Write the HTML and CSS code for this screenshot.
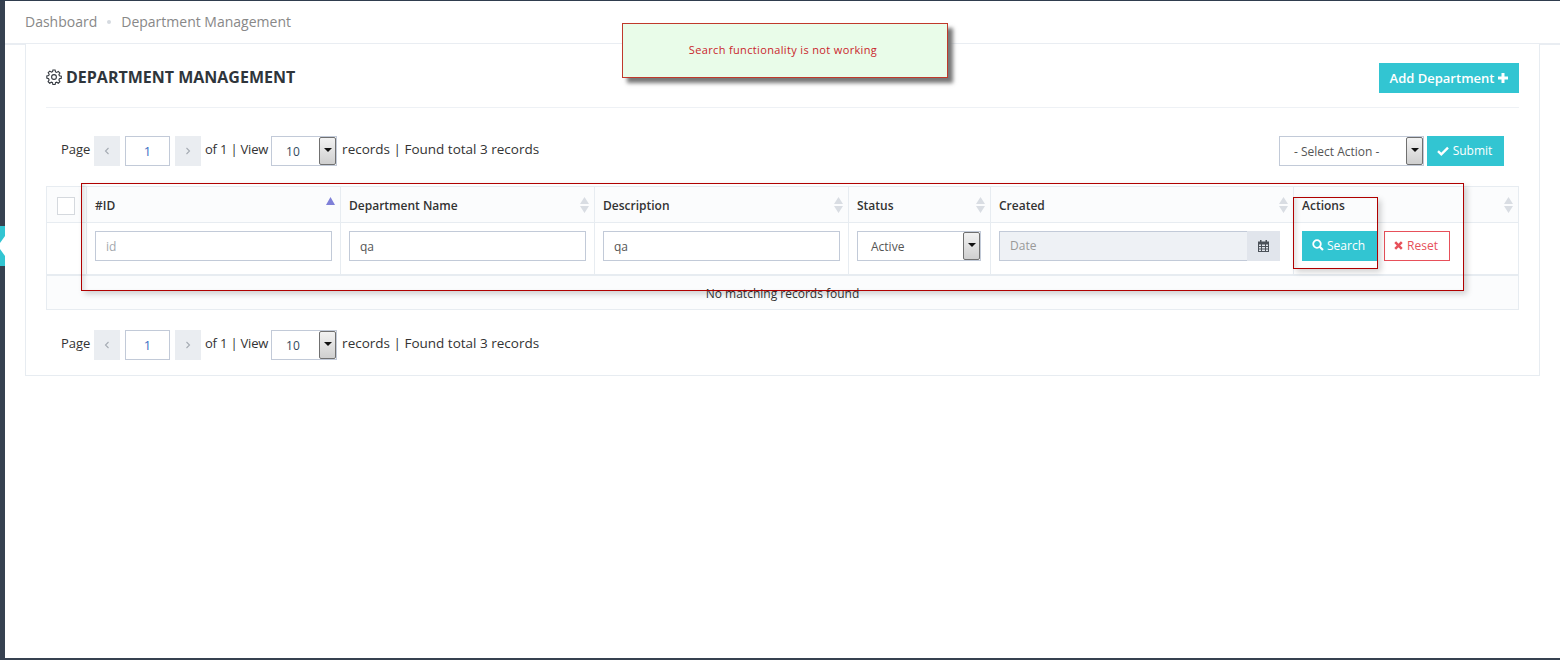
FILE: index.html
```html
<!DOCTYPE html>
<html lang="en">
<head>
    <meta charset="UTF-8">
    <title>Department Management</title>
    <link rel="stylesheet" href="styles.css">
</head>
<body>
<div class="shell">
    <div class="sidebar"></div>
    <div class="handle">
        <svg width="5" height="40" viewBox="0 0 5 40"><path d="M5 10 L0 17 V23 L5 30z" fill="#fff"/></svg>
    </div>
    <div class="main">
        <div class="breadcrumb">
            <span>Dashboard</span>
            <i class="crumb-dot"></i>
            <span>Department Management</span>
        </div>
        <div class="content">
            <div class="portlet">
                <div class="portlet-title">
                    <h1>
                        <svg class="gear" width="16" height="16" viewBox="0 0 16 16" fill="none" stroke="#33383f" stroke-width="1.1">
                            <circle cx="8" cy="8" r="2.4"/>
                            <path d="M6.9 1h2.2l.4 1.9 1.2.5 1.6-1 1.6 1.6-1 1.6.5 1.2 1.9.4v2.2l-1.9.4-.5 1.2 1 1.6-1.6 1.6-1.6-1-1.2.5-.4 1.9H6.900l-.4-1.900-1.200-.5-1.600 1-1.600-1.600 1-1.600-.5-1.200L.8 9.100V6.900l1.900-.4.5-1.200-1-1.600 1.600-1.600 1.600 1 1.200-.5z"/>
                        </svg>
                        DEPARTMENT MANAGEMENT
                    </h1>
                    <a class="btn btn-add">Add Department
                        <svg width="10" height="10" viewBox="0 0 10 10"><path d="M3.500 0h3v3.500H10v3H6.500V10h-3V6.500H0v-3h3.500z" fill="#fff"/></svg>
                    </a>
                </div>

                <div class="toolbar">
                    <div class="pager">
                        <span class="pager-page">Page</span>
                        <a class="pager-btn"><svg width="6" height="8" viewBox="0 0 6 8"><path d="M4.500 1 L1.500 4 L4.500 7" fill="none" stroke="#a5abb3" stroke-width="1.100"/></svg></a>
                        <span class="pager-input">1</span>
                        <a class="pager-btn"><svg width="6" height="8" viewBox="0 0 6 8"><path d="M1.500 1 L4.500 4 L1.500 7" fill="none" stroke="#a5abb3" stroke-width="1.100"/></svg></a>
                        <span class="pager-of">of 1 | View</span>
                        <div class="select select-view"><span class="select-text">10</span><span class="select-arrow"></span></div>
                        <span class="pager-found">records | Found total 3 records</span>
                    </div>
                    <div class="actions">
                        <div class="select select-action"><span class="select-text">- Select Action -</span><span class="select-arrow"></span></div>
                        <a class="btn btn-submit">
                            <svg width="12" height="10" viewBox="0 0 12 10"><path d="M1 5.200 L4.300 8.300 L11 1.700" fill="none" stroke="#fff" stroke-width="2.400"/></svg>
                            Submit
                        </a>
                    </div>
                </div>

                <table class="grid">
                    <colgroup>
                        <col class="col-check"><col class="col-id"><col class="col-name"><col class="col-desc">
                        <col class="col-status"><col class="col-created"><col class="col-actions">
                    </colgroup>
                    <thead>
                        <tr>
                            <th><span class="checkbox"></span></th>
                            <th>#ID<svg class="sort sort-active" width="9" height="8" viewBox="0 0 9 8"><path d="M4.500 0 L9 8 H0z" fill="#7f80d8"/></svg></th>
                            <th>Department Name<svg class="sort" width="9" height="16" viewBox="0 0 9 16"><path d="M4.500 0 L9 7 H0z M4.500 16 L9 9 H0z" fill="#d9dde3"/></svg></th>
                            <th>Description<svg class="sort" width="9" height="16" viewBox="0 0 9 16"><path d="M4.500 0 L9 7 H0z M4.500 16 L9 9 H0z" fill="#d9dde3"/></svg></th>
                            <th>Status<svg class="sort" width="9" height="16" viewBox="0 0 9 16"><path d="M4.500 0 L9 7 H0z M4.500 16 L9 9 H0z" fill="#d9dde3"/></svg></th>
                            <th>Created<svg class="sort" width="9" height="16" viewBox="0 0 9 16"><path d="M4.500 0 L9 7 H0z M4.500 16 L9 9 H0z" fill="#d9dde3"/></svg></th>
                            <th>Actions<svg class="sort" width="9" height="16" viewBox="0 0 9 16"><path d="M4.500 0 L9 7 H0z M4.500 16 L9 9 H0z" fill="#d9dde3"/></svg></th>
                        </tr>
                    </thead>
                    <tbody>
                        <tr class="filter-row">
                            <td></td>
                            <td><span class="field field-empty">id</span></td>
                            <td><span class="field">qa</span></td>
                            <td><span class="field">qa</span></td>
                            <td><div class="select select-status"><span class="select-text">Active</span><span class="select-arrow"></span></div></td>
                            <td>
                                <div class="date">
                                    <span class="date-text">Date</span>
                                    <span class="date-addon">
                                        <svg width="11" height="12" viewBox="0 0 11 12"><path d="M2 0h1.500v1.500h4V0H9v1.500h2V12H0V1.500h2z M1 4.500v1.500h2V4.500z M4 4.500v1.500h3V4.500z M8 4.500v1.500h2V4.500z M1 7v1.500h2V7z M4 7v1.500h3V7z M8 7v1.500h2V7z M1 9.500V11h2V9.500z M4 9.500V11h3V9.500z M8 9.500V11h2V9.500z" fill="#4b5159" fill-rule="evenodd"/></svg>
                                    </span>
                                </div>
                            </td>
                            <td>
                                <div class="row-actions">
                                    <a class="btn btn-search">
                                        <svg width="12" height="12" viewBox="0 0 12 12"><circle cx="5" cy="5" r="3.800" fill="none" stroke="#fff" stroke-width="1.800"/><path d="M7.700 7.700 L11 11" stroke="#fff" stroke-width="2.200"/></svg>
                                        Search
                                    </a>
                                    <a class="btn btn-reset">
                                        <svg width="9" height="9" viewBox="0 0 9 9"><path d="M1.200 1.200 L7.800 7.800 M7.800 1.200 L1.200 7.800" stroke="#e7505a" stroke-width="2.500"/></svg>
                                        Reset
                                    </a>
                                </div>
                            </td>
                        </tr>
                        <tr class="empty-row">
                            <td colspan="7">No matching records found</td>
                        </tr>
                    </tbody>
                </table>

                <div class="toolbar toolbar-bottom">
                    <div class="pager">
                        <span class="pager-page">Page</span>
                        <a class="pager-btn"><svg width="6" height="8" viewBox="0 0 6 8"><path d="M4.500 1 L1.500 4 L4.500 7" fill="none" stroke="#a5abb3" stroke-width="1.100"/></svg></a>
                        <span class="pager-input">1</span>
                        <a class="pager-btn"><svg width="6" height="8" viewBox="0 0 6 8"><path d="M1.500 1 L4.500 4 L1.500 7" fill="none" stroke="#a5abb3" stroke-width="1.100"/></svg></a>
                        <span class="pager-of">of 1 | View</span>
                        <div class="select select-view"><span class="select-text">10</span><span class="select-arrow"></span></div>
                        <span class="pager-found">records | Found total 3 records</span>
                    </div>
                </div>
            </div>
        </div>
    </div>

    <!-- annotations drawn over the screenshot -->
    <div class="note-box note-filters"></div>
    <div class="note-box note-search"></div>
    <div class="toast">Search functionality is not working</div>
</div>
</body>
</html>
```

FILE: styles.css
```css
* {
    box-sizing: border-box;
}
body {
    margin: 0;
    font-family: "Open Sans", sans-serif;
    color: #333;
    background-color: #fff;
}
.shell {
    position: relative;
    display: flex;
    height: 660px;
    border-top: 1px solid #2f3d4e;
    border-bottom: 2px solid #364150;
    overflow: hidden;
}
.sidebar {
    width: 5px;
    flex-shrink: 0;
    background-color: #364150;
}
.handle {
    position: absolute;
    left: 0;
    top: 225px;
    width: 5px;
    height: 40px;
    background-color: #32c5d2;
}
.handle svg {
    display: block;
}
.main {
    flex: 1;
    min-width: 0;
}
.breadcrumb {
    display: flex;
    align-items: center;
    height: 44px;
    padding: 0 0 1px 20px;
    font-size: 14px;
    color: #888;
    background-color: #fff;
    border-bottom: 2px solid #e9edf2;
}
.crumb-dot {
    width: 4px;
    height: 4px;
    margin: 0 10px;
    border-radius: 50%;
    background-color: #d5dae0;
}
.content {
    padding: 0 20px;
}
.portlet {
    height: 332px;
    margin-top: -1px;
    padding: 0 20px;
    background-color: #fff;
    border: 1px solid #e7ecf1;
    border-top: 0;
}
.portlet-title {
    display: flex;
    align-items: center;
    justify-content: space-between;
    height: 64px;
    padding-top: 19px;
    border-bottom: 1px solid #eef1f5;
}
.portlet-title h1 {
    display: flex;
    align-items: center;
    gap: 4px;
    margin: -17px 0 0;
    font-size: 16px;
    font-weight: 700;
    color: #2f353b;
}
.btn {
    display: inline-flex;
    align-items: center;
    justify-content: center;
    gap: 4px;
    height: 30px;
    font-size: 13px;
    color: #fff;
    background-color: #32c5d2;
}
.btn-add {
    width: 140px;
    font-weight: 600;
    align-self: flex-start;
}
.toolbar {
    display: flex;
    align-items: center;
    justify-content: space-between;
    height: 30px;
    margin-top: 28px;
    padding: 0 15px;
}
.toolbar-bottom {
    margin-top: 20px;
}
.pager {
    display: flex;
    align-items: center;
    font-size: 13px;
}
.pager-page {
    width: 33px;
    padding-bottom: 4px;
}
.pager-btn {
    display: flex;
    align-items: center;
    justify-content: center;
    width: 26px;
    height: 30px;
    background-color: #eaedf1;
}
.pager-input {
    display: flex;
    align-items: center;
    justify-content: center;
    width: 45px;
    height: 30px;
    margin: 0 5px;
    padding-bottom: 1px;
    font-size: 13px;
    color: #3a6fc4;
    background-color: #fff;
    border: 1px solid #c2cad8;
}
.pager-of {
    margin: 0 3px 0 4px;
    padding-bottom: 4px;
    letter-spacing: -0.2px;
}
.pager-found {
    margin-left: 5px;
    padding-bottom: 4px;
    font-size: 13.5px;
}
.select {
    display: flex;
    flex-shrink: 0;
    justify-content: space-between;
    height: 30px;
    font-size: 12px;
    color: #555;
    background-color: #fff;
    border: 1px solid #c2cad8;
}
.select-text {
    align-self: center;
    padding-top: 1px;
}
.select-arrow {
    position: relative;
    width: 17px;
    background: linear-gradient(#f2f2f2, #cfcfcf);
    border: 1px solid #707070;
    border-radius: 2px;
}
.select-arrow::after {
    content: "";
    position: absolute;
    left: 4px;
    top: 10px;
    border-left: 4px solid transparent;
    border-right: 4px solid transparent;
    border-top: 4px solid #111;
}
.select-view {
    width: 66px;
    padding-left: 14px;
    color: #34495e;
}
.select-action {
    width: 145px;
    padding-left: 14px;
}
.select-status {
    width: 124px;
    padding-left: 13px;
}
.actions {
    display: flex;
    gap: 3px;
}
.btn-submit {
    width: 77px;
    padding: 0 2px 1px 0;
    font-size: 12px;
}
.grid {
    width: 1472px;
    margin-top: 20px;
    table-layout: fixed;
    border-collapse: collapse;
    font-size: 12px;
}
.col-check { width: 40px; }
.col-id { width: 254px; }
.col-name { width: 254px; }
.col-desc { width: 254px; }
.col-status { width: 142px; }
.col-created { width: 303px; }
.col-actions { width: 225px; }
.grid th {
    position: relative;
    height: 36px;
    padding: 2px 8px 0;
    text-align: left;
    font-weight: 600;
    color: #333;
    background-color: #fbfcfd;
    border: 1px solid #e7ecf1;
}
.grid td {
    padding: 0 8px;
    border: 1px solid #e7ecf1;
}
.checkbox {
    display: block;
    width: 18px;
    height: 18px;
    margin-left: 2px;
    background-color: #fff;
    border: 1px solid #d5d9de;
}
.sort {
    position: absolute;
    right: 5px;
    top: 10px;
}
.filter-row td {
    height: 52px;
    padding-top: 8px;
    vertical-align: top;
    border-bottom-width: 2px;
}
.field {
    display: flex;
    align-items: center;
    height: 30px;
    padding-left: 10px;
    color: #555;
    background-color: #fff;
    border: 1px solid #c2cad8;
}
.field-empty {
    color: #a3a8ad;
}
.date {
    display: flex;
    width: 281px;
    height: 30px;
    background-color: #eef1f5;
    border: 1px solid #c2cad8;
    border-right: 0;
}
.date-text {
    flex: 1;
    align-self: center;
    padding: 0 0 2px 10px;
    color: #999;
}
.date-addon {
    display: flex;
    align-items: center;
    justify-content: center;
    width: 33px;
    margin: -1px 0;
    background-color: #e1e5ec;
}
.row-actions {
    display: flex;
    gap: 7px;
}
.btn-search {
    width: 75px;
    gap: 3px;
    padding: 0 2px 2px 0;
    font-size: 12px;
}
.btn-reset {
    width: 66px;
    padding: 0 2px 2px 0;
    font-size: 12px;
    color: #e7505a;
    background-color: #fff;
    border: 1px solid #e7505a;
}
.empty-row td {
    height: 35px;
    padding-top: 3px;
    text-align: center;
    background-color: #fbfcfd;
}
.note-box {
    position: absolute;
    border: 1px solid #b00000;
    box-shadow: 3px 3px 6px rgba(0, 0, 0, 0.18), inset 5px 0 4px -2px rgba(0, 0, 0, 0.1);
}
.note-filters {
    left: 81px;
    top: 182px;
    width: 1383px;
    height: 108px;
}
.note-search {
    left: 1293px;
    top: 196px;
    width: 85px;
    height: 72px;
}
.toast {
    position: absolute;
    left: 622px;
    top: 22px;
    display: flex;
    align-items: center;
    justify-content: center;
    width: 326px;
    height: 55px;
    padding: 0 4px 2px 0;
    font-size: 11px;
    letter-spacing: 0.35px;
    color: #c9262c;
    background-color: #e9fce9;
    border: 1px solid #c0392b;
    box-shadow: 5px 5px 4px #777;
}
```
